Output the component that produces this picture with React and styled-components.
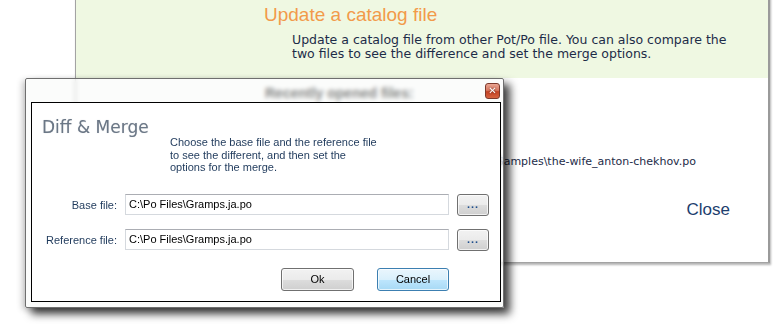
import styled, { createGlobalStyle } from "styled-components";

const Global = createGlobalStyle`
  html, body {
    margin: 0;
    padding: 0;
    background: #fff;
  }
  body {
    font-family: "Liberation Sans", Arial, sans-serif;
  }
`;

const Desktop = styled.div`
  position: relative;
  width: 776px;
  height: 324px;
  overflow: hidden;
  background: #fff;
`;

/* window behind */
const BackWindow = styled.div`
  position: absolute;
  left: 75px;
  top: -4px;
  width: 695px;
  height: 267px;
  box-sizing: border-box;
  border: 1px solid #a3a3a3;
  border-right: 2px solid #9a9a9a;
  background: #fff;
  box-shadow: 1px 2px 2px rgba(0, 0, 0, 0.3);
  display: flex;
  flex-direction: column;
`;

const Header = styled.div`
  height: 81px;
  background: #eff8e2;
  padding: 7px 0 0 188px;
  box-sizing: border-box;
`;

const HeaderTitle = styled.div`
  font-size: 19px;
  line-height: 22px;
  color: #f29a4a;
`;

const HeaderText = styled.div`
  margin: 7px 0 0 28px;
  font-family: "DejaVu Sans", Verdana, sans-serif;
  font-size: 12.5px;
  line-height: 14px;
  color: #1d2c48;
  white-space: nowrap;
`;

const Body = styled.div`
  flex: 1;
  display: flex;
  flex-direction: column;
`;

const RecentLabel = styled.div`
  margin: 7px 0 0 189px;
  font-size: 14px;
  font-weight: bold;
  line-height: 17px;
  color: #111;
`;

const PathRow = styled.div`
  margin-top: 53px;
  display: flex;
  justify-content: flex-end;
  padding-right: 72px;
  font-family: "DejaVu Sans", Verdana, sans-serif;
  font-size: 11px;
  line-height: 14px;
  color: #1d2c48;
  white-space: nowrap;
`;

const CloseRow = styled.div`
  margin-top: 31px;
  display: flex;
  justify-content: flex-end;
  padding-right: 38px;
  font-size: 17px;
  line-height: 20px;
  color: #1c3e6e;
`;

/* dialog */
const Dialog = styled.div`
  position: absolute;
  left: 25px;
  top: 78px;
  width: 479px;
  height: 230px;
  box-sizing: border-box;
  border: 1px solid #6f6f6f;
  border-radius: 2px;
  background: rgba(248, 250, 247, 0.5);
  backdrop-filter: blur(2px);
  box-shadow: 6px 6px 8px rgba(0, 0, 0, 0.75), -3px 2px 6px rgba(0, 0, 0, 0.2);
  padding: 0 2px 5px 5px;
  display: flex;
  flex-direction: column;
`;

const TitleBar = styled.div`
  height: 23px;
  display: flex;
  justify-content: flex-end;
  align-items: flex-start;
  padding: 4px 1px 0 0;
  box-sizing: border-box;
`;

const CloseBox = styled.div`
  width: 15px;
  height: 16px;
  box-sizing: border-box;
  border: 1px solid #7d3a2c;
  border-radius: 3px;
  background: linear-gradient(#eaa592 0%, #d87a62 45%, #c34224 55%, #d7633f 100%);
  color: #fff;
  font-family: "DejaVu Sans", sans-serif;
  font-size: 10px;
  font-weight: bold;
  line-height: 13px;
  text-align: center;
  text-shadow: 0 0 2px #5a1a10;
`;

const Panel = styled.div`
  flex: 1;
  border: 1px solid #000;
  background: #fff;
  padding: 13px 51px 0 10px;
  display: flex;
  flex-direction: column;
`;

const Heading = styled.div`
  font-family: "DejaVu Sans", sans-serif;
  font-size: 17px;
  line-height: 22px;
  color: #6b7786;
  text-shadow: 0 0 1px rgba(120, 130, 140, 0.4);
`;

const Intro = styled.div`
  margin: -2px 0 0 128px;
  font-size: 11px;
  line-height: 12.5px;
  color: #1e395b;
  white-space: nowrap;
`;

const Form = styled.div`
  margin: 20px 0 0 -10px;
  display: grid;
  grid-template-columns: 85px 324px 32px;
  column-gap: 8px;
  row-gap: 13px;
  align-items: center;
`;

const Label = styled.div`
  text-align: right;
  font-size: 11px;
  color: #1e395b;
`;

const Field = styled.div`
  height: 21px;
  box-sizing: border-box;
  border: 1px solid #d5d9de;
  border-top-color: #abadb3;
  padding: 0 3px;
  font-size: 11px;
  line-height: 19px;
  color: #000;
`;

const Button = styled.div`
  height: ${(p) => p.$h || 23}px;
  width: ${(p) => p.$w}px;
  box-sizing: border-box;
  border: 1px solid ${(p) => (p.$primary ? "#3c7fb1" : "#707070")};
  border-radius: 3px;
  background: ${(p) =>
    p.$primary
      ? "linear-gradient(#eaf6fd 0%, #d9f0fc 50%, #bee6fd 51%, #a7d9f5 100%)"
      : "linear-gradient(#f2f2f2 0%, #ebebeb 50%, #dddddd 51%, #cfcfcf 100%)"};
  box-shadow: inset 0 0 0 1px rgba(255, 255, 255, 0.7);
  display: flex;
  align-items: center;
  justify-content: center;
  font-size: 11px;
  color: #000;
`;

const Dots = styled.span`
  color: #1e4e8c;
  font-weight: bold;
  letter-spacing: 1px;
  margin-top: -2px;
`;

const Actions = styled.div`
  margin-top: 17px;
  display: flex;
  justify-content: flex-end;
  gap: 23px;
`;

export default function App() {
  return (
    <Desktop>
      <Global />
      <BackWindow>
        <Header>
          <HeaderTitle>Update a catalog file</HeaderTitle>
          <HeaderText>
            Update a catalog file from other Pot/Po file. You can also compare the
            <br />
            two files to see the difference and set the merge options.
          </HeaderText>
        </Header>
        <Body>
          <RecentLabel>Recently opened files:</RecentLabel>
          <PathRow>C:\Program Files\Poedit\Samples\the-wife_anton-chekhov.po</PathRow>
          <CloseRow>Close</CloseRow>
        </Body>
      </BackWindow>

      <Dialog>
        <TitleBar>
          <CloseBox>✕</CloseBox>
        </TitleBar>
        <Panel>
          <Heading>Diff &amp; Merge</Heading>
          <Intro>
            Choose the base file and the reference file
            <br />
            to see the different, and then set the
            <br />
            options for the merge.
          </Intro>
          <Form>
            <Label>Base file:</Label>
            <Field>C:\Po Files\Gramps.ja.po</Field>
            <Button $w={32} $h={22}>
              <Dots>...</Dots>
            </Button>
            <Label>Reference file:</Label>
            <Field>C:\Po Files\Gramps.ja.po</Field>
            <Button $w={32} $h={22}>
              <Dots>...</Dots>
            </Button>
          </Form>
          <Actions>
            <Button $w={73}>Ok</Button>
            <Button $w={72} $primary>
              Cancel
            </Button>
          </Actions>
        </Panel>
      </Dialog>
    </Desktop>
  );
}
